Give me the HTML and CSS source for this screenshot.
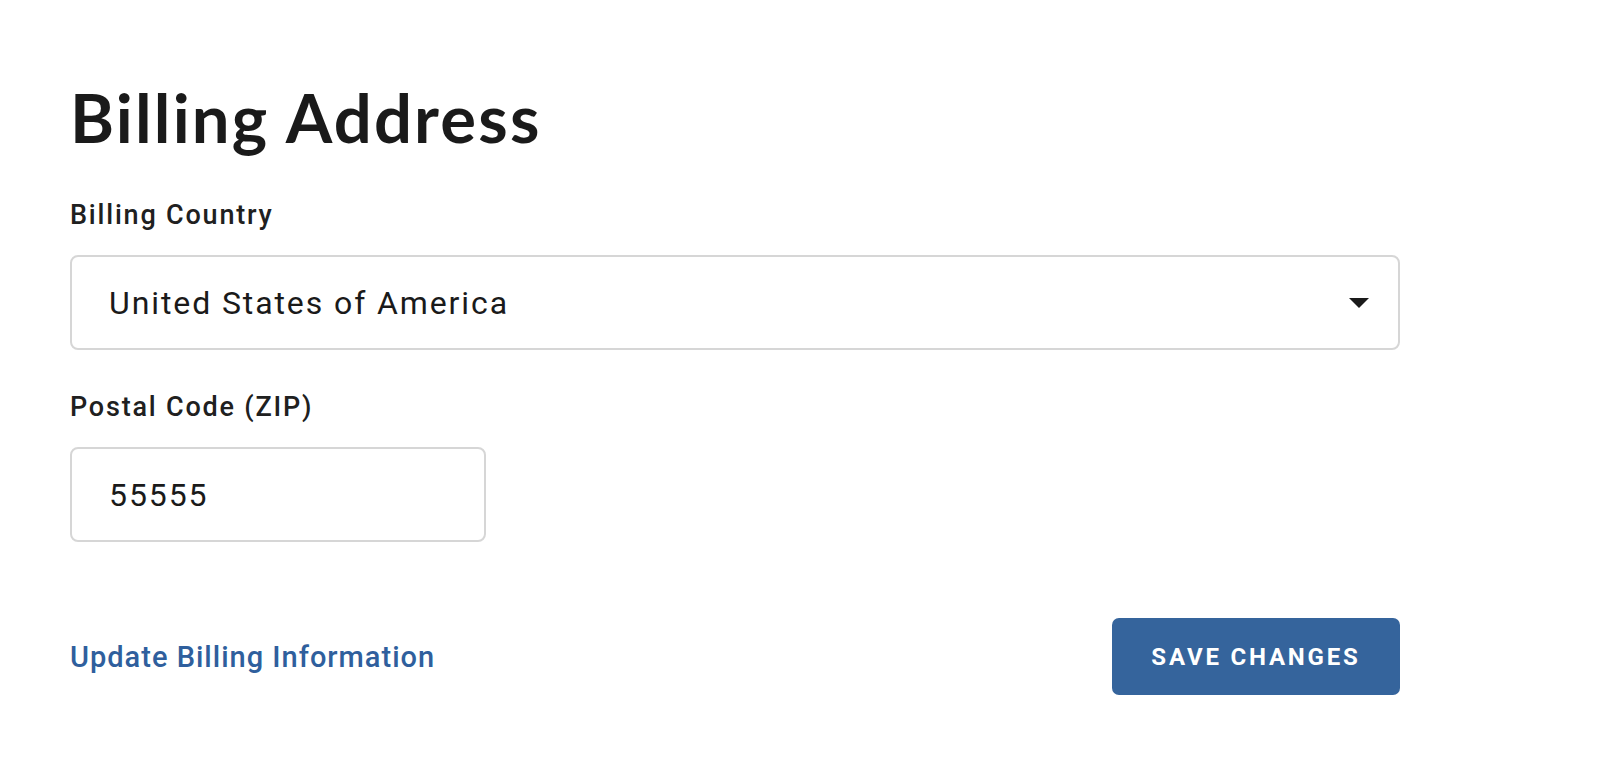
FILE: index.html
```html
<!DOCTYPE html>
<html lang="en">
<head>
<meta charset="utf-8">
<title>Billing Address</title>
<link rel="stylesheet" href="styles.css">
</head>
<body>
<main class="page">
  <h1 class="title">Billing Address</h1>
  <div class="field">
    <div class="label">Billing Country</div>
    <div class="control select">
      <span class="value">United States of America</span>
      <svg class="caret" width="20" height="10" viewBox="0 0 20 10"><path d="M0 0 L20 0 L10 10 Z" fill="#1a1a1a"/></svg>
    </div>
  </div>
  <div class="field">
    <div class="label">Postal Code (ZIP)</div>
    <div class="control zip"><span class="value">55555</span></div>
  </div>
  <div class="footer">
    <a class="link" href="#">Update Billing Information</a>
    <button class="btn" type="button">SAVE CHANGES</button>
  </div>
</main>
</body>
</html>
```
FILE: styles.css
```css
html, body {
  margin: 0;
  padding: 0;
  background: #ffffff;
}
body {
  font-family: Roboto, "Liberation Sans", sans-serif;
  color: #1c1c1c;
}
.page {
  width: 1330px;
  padding: 84px 0 0 70px;
}
.title {
  font-family: Lato, "Noto Sans", sans-serif;
  font-weight: 700;
  font-size: 67px;
  line-height: 67px;
  letter-spacing: 2.2px;
  margin: 0 0 48px 0;
  color: #1a1a1a;
}
.field {
  margin-bottom: 41px;
}
.label {
  font-size: 27px;
  font-weight: 500;
  line-height: 32px;
  letter-spacing: 1.8px;
  margin-bottom: 24px;
  color: #202020;
}
.control {
  box-sizing: border-box;
  height: 95px;
  border: 2px solid #d6d6d6;
  border-radius: 8px;
  display: flex;
  align-items: center;
  padding: 0 29px 0 37px;
  font-size: 32px;
  letter-spacing: 1.9px;
  color: #1a1a1a;
}
.select {
  width: 1330px;
  justify-content: space-between;
}
.zip {
  width: 416px;
}
.caret {
  display: block;
}
.footer {
  display: flex;
  justify-content: space-between;
  align-items: center;
  margin-top: 76px;
}
.link {
  font-size: 29px;
  font-weight: 500;
  letter-spacing: 1px;
  color: #2f5f9d;
  text-decoration: none;
}
.btn {
  width: 288px;
  height: 77px;
  border: none;
  border-radius: 7px;
  background: #35649c;
  color: #ffffff;
  font-family: Roboto, "Liberation Sans", sans-serif;
  font-weight: 700;
  font-size: 24px;
  letter-spacing: 2.8px;
  padding: 0;
}
```
